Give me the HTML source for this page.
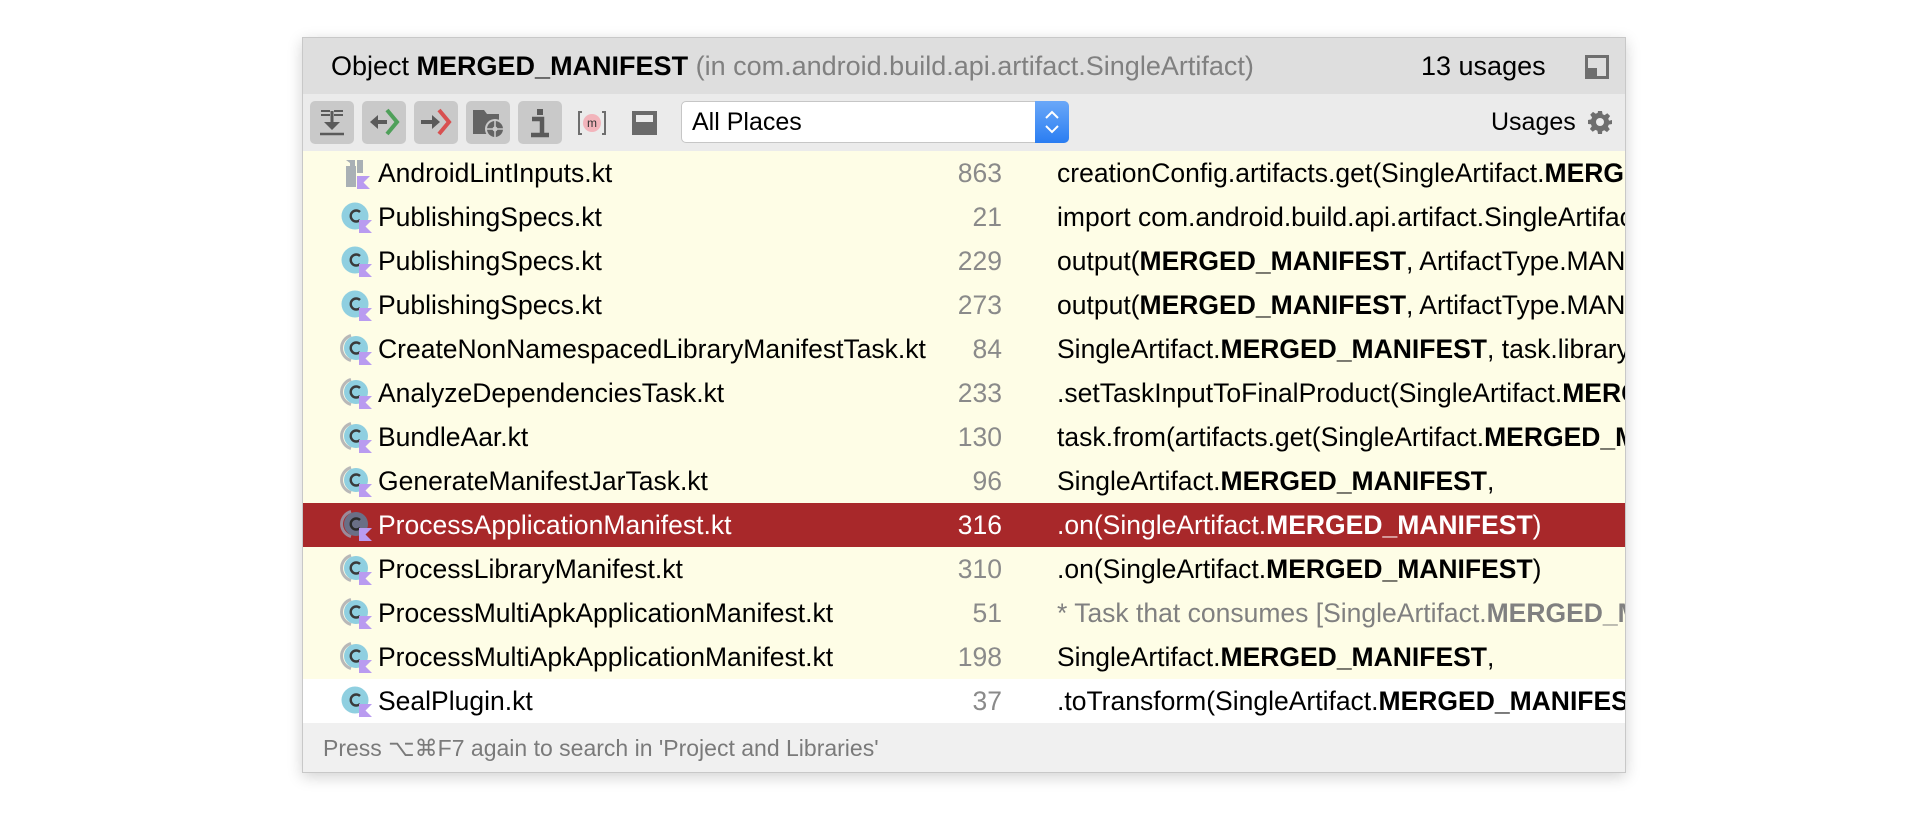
<!DOCTYPE html>
<html><head><meta charset="utf-8"><style>
*{margin:0;padding:0;box-sizing:border-box}
body{width:1928px;height:826px;background:#fff;position:relative;overflow:hidden;font-family:"Liberation Sans",sans-serif;}
.panel{position:absolute;left:302px;top:37px;width:1324px;height:736px;background:#f0f0f0;border:1px solid #c8c8c8;box-shadow:0 4px 14px rgba(0,0,0,0.18);overflow:hidden}
.title{position:absolute;left:0;top:0;width:100%;height:56px;background:#dedede;font-size:27px;line-height:56px;color:#000;white-space:nowrap}
.tb{position:absolute;left:0;top:56px;width:100%;height:57px;background:#ebebeb}
.btn{position:absolute;top:7px;width:44px;height:43px;background:#c9c9c9;border-radius:5px}
.btn svg{position:absolute;left:0;top:0}
.row{position:absolute;left:0;width:100%;height:44px;background:#fefde6;font-size:26.5px;line-height:44px;color:#000;white-space:nowrap;overflow:hidden}
.row .ic{position:absolute;left:37px;top:6px}
.row .fn{position:absolute;left:75px}
.row .ln{position:absolute;right:623px;color:#8a8a8a;text-align:right}
.row .code{position:absolute;left:754px}
.row.sel{background:#a8282a;color:#fff}
.row.sel .ln{color:#fff}
.gray{color:#808080}
.footer{position:absolute;left:0;top:685px;width:100%;height:51px;background:#f0f0f0;font-size:23px;line-height:51px;color:#7a7a7a;padding-left:20px}
</style></head><body>
<svg width="0" height="0" style="position:absolute"><defs>
<g id="kc"><circle cx="15" cy="15" r="13.5" fill="#8fcfe0"/><path d="M20 11a5.5 5.5 0 1 0 0 8" fill="none" stroke="#3a3a3a" stroke-width="2.4"/><path d="M19 19h13l-6.5 6.5 6.5 6.5H19z" fill="#b99bf0"/></g>
<g id="kcd"><path d="M11 2.5a13 13 0 0 0 0 25" fill="none" stroke="#b8b8b8" stroke-width="3"/><circle cx="16" cy="15" r="12" fill="#8fcfe0"/><path d="M20 11a5.5 5.5 0 1 0 0 8" fill="none" stroke="#3a3a3a" stroke-width="2.4"/><path d="M19 19h13l-6.5 6.5 6.5 6.5H19z" fill="#b99bf0"/></g>
<g id="kcs"><path d="M11 2.5a13 13 0 0 0 0 25" fill="none" stroke="#9a8a9a" stroke-width="3"/><circle cx="16" cy="15" r="12" fill="#6a6f86"/><path d="M20 11a5.5 5.5 0 1 0 0 8" fill="none" stroke="#2a2a2a" stroke-width="2.4"/><path d="M19 19h13l-6.5 6.5 6.5 6.5H19z" fill="#b99bf0"/></g>
<g id="kf"><path d="M6 3h9v6h-5v-3z" fill="#a9b0b5"/><rect x="6" y="9" width="10" height="21" fill="#a9b0b5"/><rect x="17" y="3" width="6" height="13" fill="#a9b0b5"/><path d="M17 19h13l-6.5 6.5 6.5 6.5H17z" fill="#b99bf0"/></g>
</defs></svg>
<div class="panel">
 <div class="title"><span style="position:absolute;left:28px">Object <b>MERGED_MANIFEST</b> <span style="color:#808080">(in com.android.build.api.artifact.SingleArtifact)</span></span>
 <span style="position:absolute;left:1118px">13 usages</span>
 <svg style="position:absolute;left:1282px;top:17px" width="24" height="24"><rect x="1.5" y="1.5" width="21" height="21" fill="none" stroke="#6e6e6e" stroke-width="3"/><rect x="1" y="13" width="11" height="10" fill="#6e6e6e"/></svg>
 </div>
 <div class="tb">
  <div class="btn" style="left:7px"><svg width="44" height="43"><path d="M11 10h9M24 10h9M11 14h9M24 14h9" stroke="#5a5a5a" stroke-width="2"/><path d="M22 10v14" stroke="#5a5a5a" stroke-width="3"/><path d="M14 21l8 8 8-8z" fill="#5a5a5a"/><path d="M10 33h24" stroke="#5a5a5a" stroke-width="2.5"/></svg></div>
  <div class="btn" style="left:59px"><svg width="44" height="43"><path d="M25 9l10 12-10 12" fill="none" stroke="#4fa05a" stroke-width="4"/><path d="M12 21h13" stroke="#5a5a5a" stroke-width="4"/><path d="M8 21l8-7v14z" fill="#5a5a5a"/></svg></div>
  <div class="btn" style="left:111px"><svg width="44" height="43"><path d="M25 9l10 12-10 12" fill="none" stroke="#d85050" stroke-width="4"/><path d="M7 21h13" stroke="#5a5a5a" stroke-width="4"/><path d="M26 21l-8-7v14z" fill="#5a5a5a"/></svg></div>
  <div class="btn" style="left:163px"><svg width="44" height="43"><path d="M7 9h11l3 4h12v20H7z" fill="#646464"/><circle cx="29" cy="28" r="10" fill="#c9c9c9"/><circle cx="29" cy="28" r="8" fill="#646464"/><circle cx="29" cy="28" r="2.5" fill="#c9c9c9"/><path d="M29 20v6M37 28h-6M29 36v-6M21 28h6" stroke="#c9c9c9" stroke-width="1.6"/></svg></div>
  <div class="btn" style="left:215px"><svg width="44" height="43"><rect x="19" y="8" width="6" height="6" fill="#5a5a5a"/><path d="M14 18h10v15M13 34h18" stroke="#5a5a5a" stroke-width="4.5" fill="none"/></svg></div>
  <svg style="position:absolute;left:274px;top:17px" width="30" height="24"><path d="M5 1H2v22h3M25 1h3v22h-3" stroke="#6e6e6e" stroke-width="2" fill="none"/><circle cx="15" cy="12" r="9" fill="#f2b4bb"/><text x="15" y="16" font-size="12" text-anchor="middle" font-family="Liberation Sans" fill="#333">m</text></svg>
  <svg style="position:absolute;left:329px;top:17px" width="25" height="24"><rect x="0" y="0" width="25" height="24" fill="#6a6a6a"/><rect x="4" y="4" width="17" height="7" fill="#ebebeb"/></svg>
  <div style="position:absolute;left:378px;top:7px;width:388px;height:42px;background:#fff;border:1px solid #c6c6c6;border-radius:5px;font-size:25px;line-height:40px;padding-left:10px">All Places
   <div style="position:absolute;right:-1px;top:-1px;width:34px;height:42px;background:linear-gradient(#6aa8f8,#2a7df2);border-radius:0 5px 5px 0"><svg width="34" height="42"><path d="M11 17l6-6 6 6M11 25l6 6 6-6" stroke="#fff" stroke-width="2" fill="none"/></svg></div>
  </div>
  <span style="position:absolute;left:1188px;top:0;font-size:25px;line-height:57px">Usages</span>
  <svg style="position:absolute;left:1285px;top:16px" width="24" height="24" viewBox="0 0 24 24"><path fill="#6e6e6e" d="M10 1h4l.6 3.2 2 .9 2.7-1.9 2.8 2.8-1.9 2.7.9 2L24 10v4l-3.2.6-.9 2 1.9 2.7-2.8 2.8-2.7-1.9-2 .9L14 24h-4l-.6-3.2-2-.9-2.7 1.9-2.8-2.8 1.9-2.7-.9-2L0 14v-4l3.2-.6.9-2L2.2 4.7 5 1.9l2.7 1.9 2-.9z"/><circle cx="12" cy="12" r="4" fill="#ebebeb"/></svg>
 </div>

 <div class="row" style="top:113px"><svg class="ic" width="34" height="34"><use href="#kf"/></svg><span class="fn">AndroidLintInputs.kt</span><span class="ln">863</span><span class="code">creationConfig.artifacts.get(SingleArtifact.<b>MERGED_MANIFEST</b>)</span></div>
 <div class="row" style="top:157px"><svg class="ic" width="34" height="34"><use href="#kc"/></svg><span class="fn">PublishingSpecs.kt</span><span class="ln">21</span><span class="code">import com.android.build.api.artifact.SingleArtifact</span></div>
 <div class="row" style="top:201px"><svg class="ic" width="34" height="34"><use href="#kc"/></svg><span class="fn">PublishingSpecs.kt</span><span class="ln">229</span><span class="code">output(<b>MERGED_MANIFEST</b>, ArtifactType.MANIFEST)</span></div>
 <div class="row" style="top:245px"><svg class="ic" width="34" height="34"><use href="#kc"/></svg><span class="fn">PublishingSpecs.kt</span><span class="ln">273</span><span class="code">output(<b>MERGED_MANIFEST</b>, ArtifactType.MANIFEST)</span></div>
 <div class="row" style="top:289px"><svg class="ic" width="34" height="34"><use href="#kcd"/></svg><span class="fn">CreateNonNamespacedLibraryManifestTask.kt</span><span class="ln">84</span><span class="code">SingleArtifact.<b>MERGED_MANIFEST</b>, task.libraryManifest</span></div>
 <div class="row" style="top:333px"><svg class="ic" width="34" height="34"><use href="#kcd"/></svg><span class="fn">AnalyzeDependenciesTask.kt</span><span class="ln">233</span><span class="code">.setTaskInputToFinalProduct(SingleArtifact.<b>MERGED_MANIFEST</b></span></div>
 <div class="row" style="top:377px"><svg class="ic" width="34" height="34"><use href="#kcd"/></svg><span class="fn">BundleAar.kt</span><span class="ln">130</span><span class="code">task.from(artifacts.get(SingleArtifact.<b>MERGED_MANIFEST</b></span></div>
 <div class="row" style="top:421px"><svg class="ic" width="34" height="34"><use href="#kcd"/></svg><span class="fn">GenerateManifestJarTask.kt</span><span class="ln">96</span><span class="code">SingleArtifact.<b>MERGED_MANIFEST</b>,</span></div>
 <div class="row sel" style="top:465px"><svg class="ic" width="34" height="34"><use href="#kcs"/></svg><span class="fn">ProcessApplicationManifest.kt</span><span class="ln">316</span><span class="code">.on(SingleArtifact.<b>MERGED_MANIFEST</b>)</span></div>
 <div class="row" style="top:509px"><svg class="ic" width="34" height="34"><use href="#kcd"/></svg><span class="fn">ProcessLibraryManifest.kt</span><span class="ln">310</span><span class="code">.on(SingleArtifact.<b>MERGED_MANIFEST</b>)</span></div>
 <div class="row" style="top:553px"><svg class="ic" width="34" height="34"><use href="#kcd"/></svg><span class="fn">ProcessMultiApkApplicationManifest.kt</span><span class="ln">51</span><span class="code gray">* Task that consumes [SingleArtifact.<b>MERGED_MANIFEST</b>]</span></div>
 <div class="row" style="top:597px"><svg class="ic" width="34" height="34"><use href="#kcd"/></svg><span class="fn">ProcessMultiApkApplicationManifest.kt</span><span class="ln">198</span><span class="code">SingleArtifact.<b>MERGED_MANIFEST</b>,</span></div>
 <div class="row" style="top:641px;background:#fff"><svg class="ic" width="34" height="34"><use href="#kc"/></svg><span class="fn">SealPlugin.kt</span><span class="ln">37</span><span class="code">.toTransform(SingleArtifact.<b>MERGED_MANIFEST</b>)</span></div>
 <div class="footer">Press ⌥⌘F7 again to search in 'Project and Libraries'</div>
</div>
</body></html>
